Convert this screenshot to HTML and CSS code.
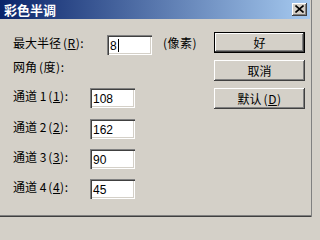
FILE: index.html
```html
<!DOCTYPE html>
<html lang="zh-CN">
<head>
<meta charset="utf-8">
<title>彩色半调</title>
<link rel="stylesheet" href="styles.css">
</head>
<body>
<div class="window">
  <div class="titlebar">
    <span class="title">彩色半调</span>
    <span class="close">
      <svg width="9" height="8" viewBox="0 0 9 8"><path d="M0.5 0.5 L8.5 7.5 M8.5 0.5 L0.5 7.5" stroke="#000" stroke-width="1.6" fill="none"/></svg>
    </span>
  </div>
  <div class="content">
    <div class="form">
      <div class="row r1">
        <span class="label wide">最大半径<span class="paren">(<u>R</u>):</span></span>
        <span class="field">8<span class="caret"></span></span>
        <span class="unit">(像素)</span>
      </div>
      <div class="row r2">
        <span class="label">网角<span class="paren">(度):</span></span>
      </div>
      <div class="row r3">
        <span class="label">通道 1<span class="paren">(<u>1</u>):</span></span>
        <span class="field">108</span>
      </div>
      <div class="row r4">
        <span class="label">通道 2<span class="paren">(<u>2</u>):</span></span>
        <span class="field">162</span>
      </div>
      <div class="row r5">
        <span class="label">通道 3<span class="paren">(<u>3</u>):</span></span>
        <span class="field">90</span>
      </div>
      <div class="row r6">
        <span class="label">通道 4<span class="paren">(<u>4</u>):</span></span>
        <span class="field">45</span>
      </div>
    </div>
    <div class="buttons">
      <div class="btn default"><span>好</span></div>
      <div class="btn"><span>取消</span></div>
      <div class="btn"><span>默认<span class="paren">(<u>D</u>)</span></span></div>
    </div>
  </div>
</div>
</body>
</html>
```
FILE: styles.css
```css
html, body {
  margin: 0;
  padding: 0;
  background: #D4D0C8;
}
.window {
  width: 313px;
  height: 217px;
  background: #D4D0C8;
  box-sizing: border-box;
  box-shadow: inset -1px 0 0 #D4D0C8, inset -2px 0 0 #808080, inset 0 -1px 0 #404040, inset 0 -2px 0 #808080;
  font-family: "Noto Sans CJK SC", "Liberation Sans", sans-serif;
  font-size: 12px;
  color: #000;
  overflow: hidden;
}
.titlebar {
  width: 310px;
  height: 19px;
  background: linear-gradient(to right, #0A246A, #A6CAF0);
  display: flex;
  align-items: center;
  justify-content: space-between;
  box-sizing: border-box;
  padding: 0 3px 0 4px;
}
.title {
  color: #fff;
  font-weight: bold;
  font-size: 13px;
  line-height: 19px;
}
.close {
  width: 15px;
  height: 13px;
  background: #D4D0C8;
  box-sizing: border-box;
  box-shadow: inset -1px -1px 0 #404040, inset 1px 1px 0 #fff, inset -2px -2px 0 #808080;
  display: flex;
  align-items: center;
  justify-content: center;
}
.close svg { display: block; margin: 0 1px 1px 0; }
.content {
  display: flex;
  padding-left: 13px;
}
.form {
  width: 201px;
  display: flex;
  flex-direction: column;
  padding-top: 16px;
}
.row {
  display: flex;
  align-items: center;
  height: 20px;
}
.r2 { margin-top: 4px; }
.r3 { margin-top: 9px; }
.r4 { margin-top: 11px; }
.r5 { margin-top: 10px; }
.r6 { margin-top: 10px; }
.label {
  width: 77px;
  white-space: nowrap;
  line-height: 14px;
  margin-bottom: 5px;
}
.label.wide { width: 94px; }
.paren { margin-left: 2px; letter-spacing: 0.5px; }
.label u, .btn u { text-decoration: underline; text-underline-offset: 1px; }
.field {
  width: 45px;
  height: 20px;
  box-sizing: border-box;
  background: #fff;
  box-shadow: inset 1px 1px 0 #808080, inset 2px 2px 0 #404040, inset -1px -1px 0 #fff, inset -2px -2px 0 #D4D0C8;
  font-family: "Liberation Sans", sans-serif;
  font-size: 12px;
  line-height: 20px;
  padding: 1px 0 0 3px;
  display: flex;
  align-items: center;
}
.caret {
  display: inline-block;
  width: 1px;
  height: 13px;
  background: #000;
  margin-left: 1px;
}
.unit {
  margin-left: 11px;
  white-space: nowrap;
  margin-bottom: 5px;
  letter-spacing: 0.5px;
}
.buttons {
  display: flex;
  flex-direction: column;
  gap: 7px;
  padding-top: 13px;
}
.btn {
  width: 91px;
  height: 21px;
  box-sizing: border-box;
  background: #D4D0C8;
  box-shadow: inset -1px -1px 0 #404040, inset 1px 1px 0 #fff, inset -2px -2px 0 #808080;
  display: flex;
  align-items: center;
  justify-content: center;
  line-height: 14px;
}
.btn.default {
  border: 1px solid #000;
}
.btn span { white-space: nowrap; }
```
